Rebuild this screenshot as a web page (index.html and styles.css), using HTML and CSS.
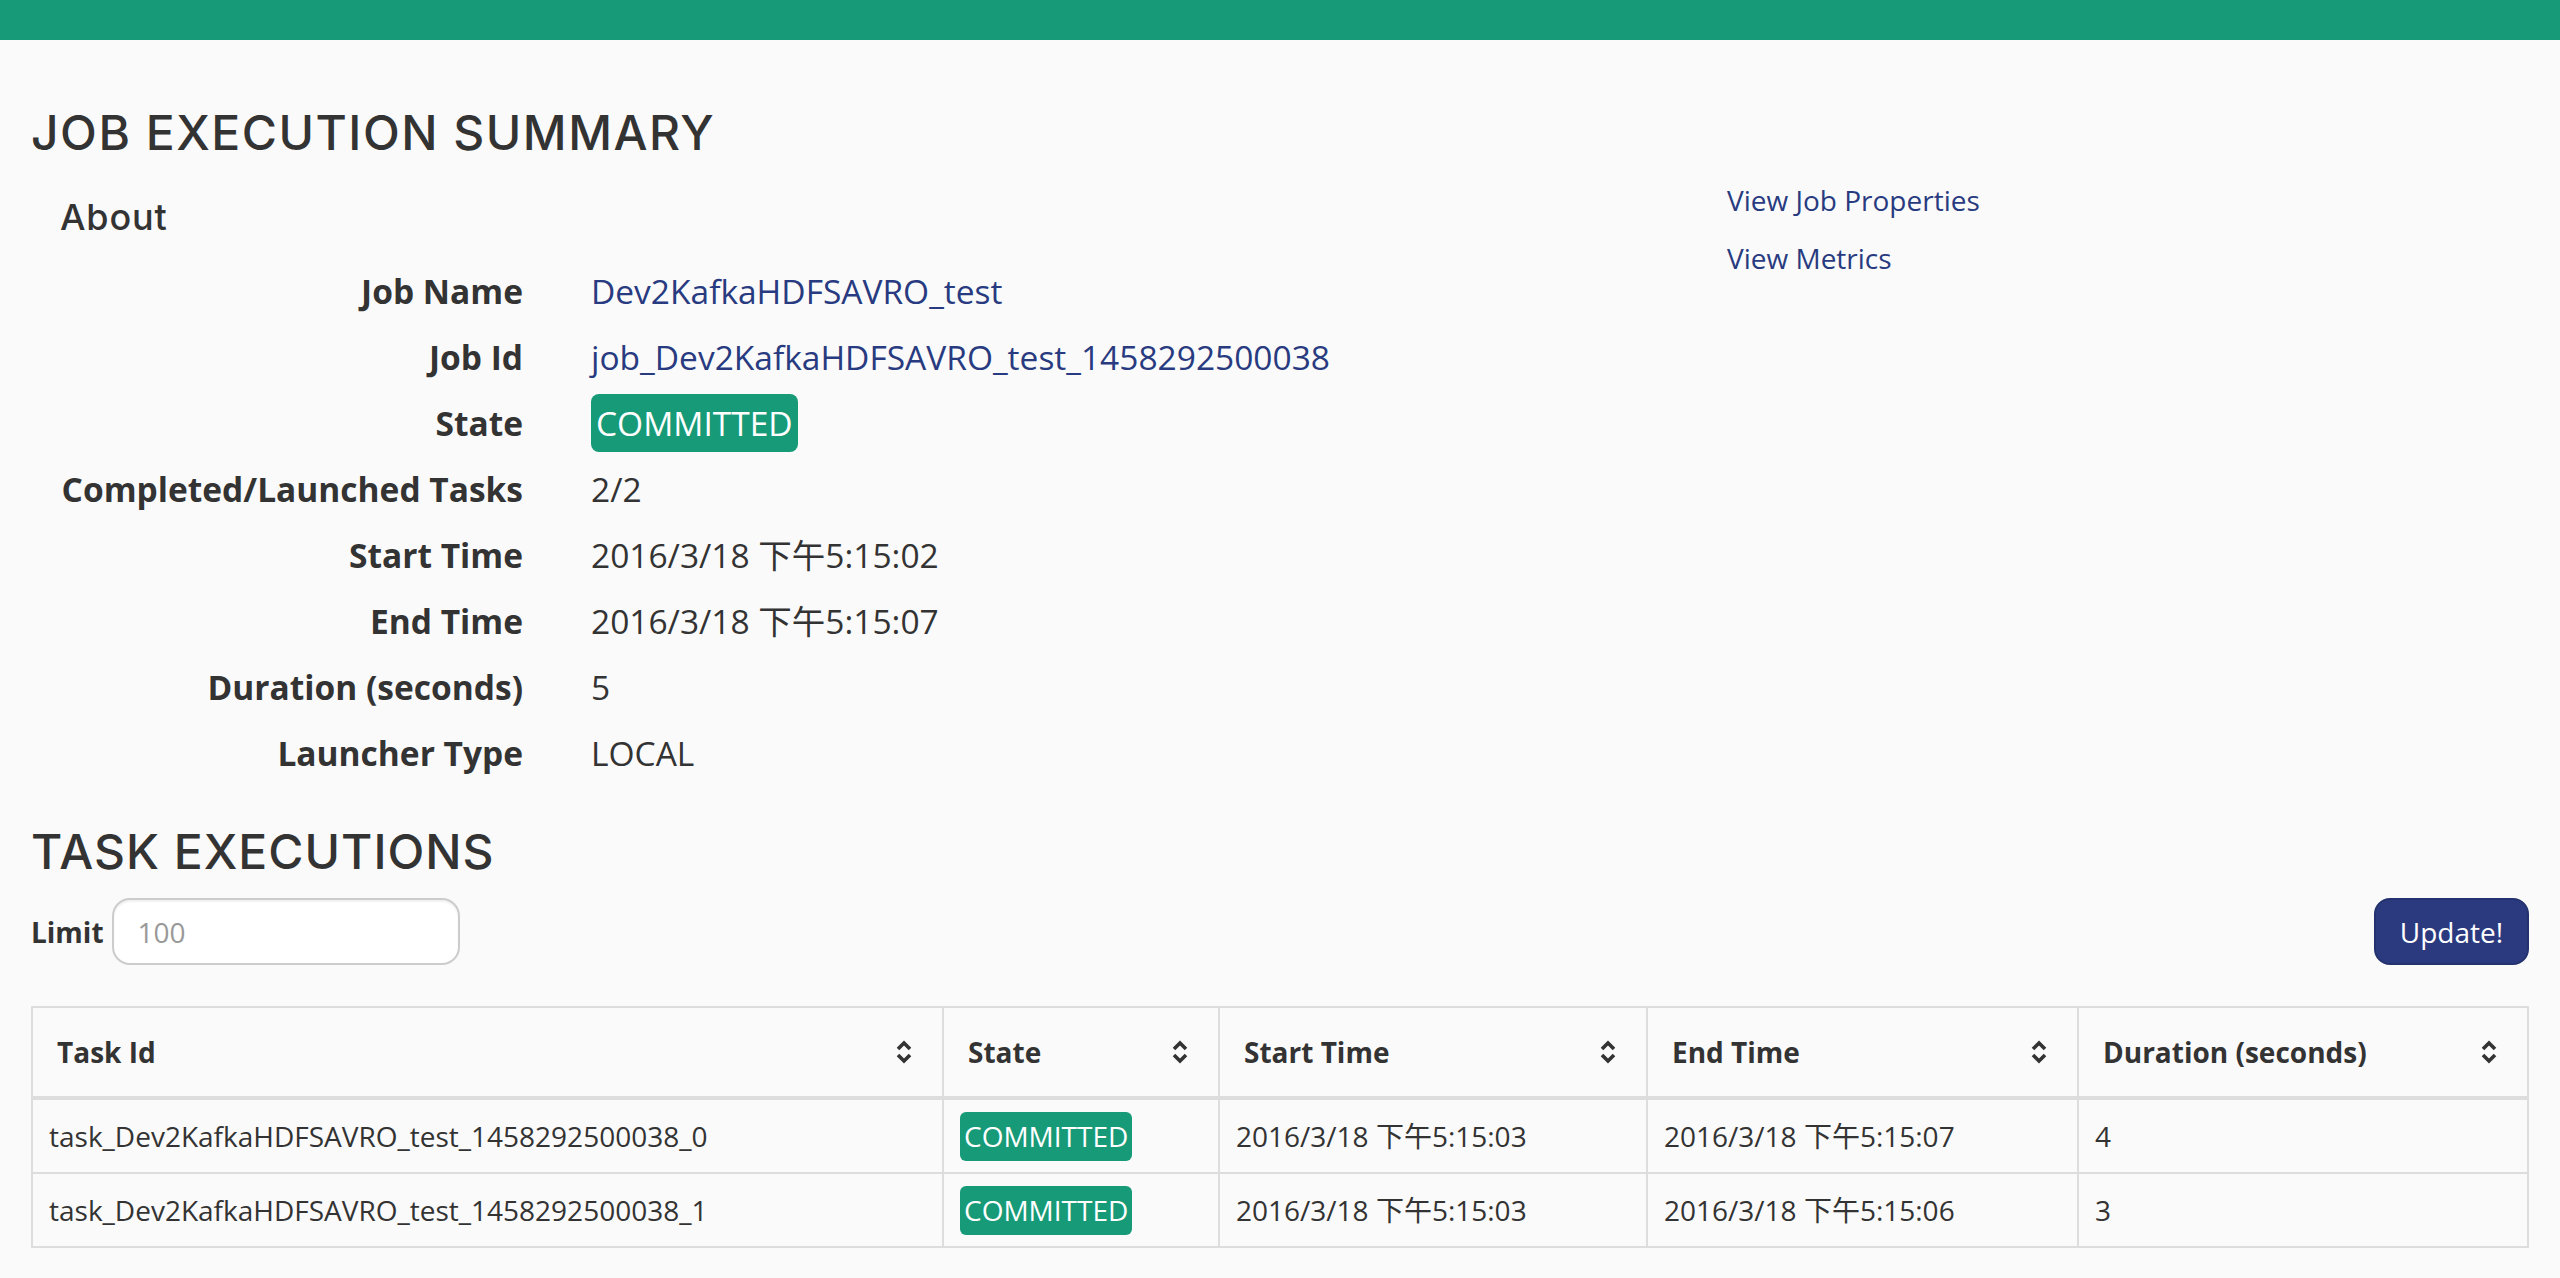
FILE: index.html
```html
<!DOCTYPE html>
<html>
<head>
<meta charset="utf-8">
<link rel="stylesheet" href="styles.css">
</head>
<body>
<div class="topbar"></div>
<main class="container">
  <h1 class="page-title">JOB EXECUTION SUMMARY</h1>
  <div class="summary-row">
    <div class="summary-main">
      <h3 class="about">About</h3>
      <dl class="details">
        <dt>Job Name</dt><dd><a href="#">Dev2KafkaHDFSAVRO_test</a></dd>
        <dt>Job Id</dt><dd><a href="#">job_Dev2KafkaHDFSAVRO_test_1458292500038</a></dd>
        <dt>State</dt><dd><span class="badge badge-lg">COMMITTED</span></dd>
        <dt>Completed/Launched Tasks</dt><dd>2/2</dd>
        <dt>Start Time</dt><dd>2016/3/18 下午5:15:02</dd>
        <dt>End Time</dt><dd>2016/3/18 下午5:15:07</dd>
        <dt>Duration (seconds)</dt><dd>5</dd>
        <dt>Launcher Type</dt><dd>LOCAL</dd>
      </dl>
    </div>
    <div class="summary-side">
      <a href="#" class="side-link">View Job Properties</a>
      <a href="#" class="side-link">View Metrics</a>
    </div>
  </div>

  <h1 class="page-title section-title">TASK EXECUTIONS</h1>
  <div class="limit-row">
    <label class="limit-label">Limit</label>
    <input class="limit-input" type="text" placeholder="100">
    <span class="spacer"></span>
    <button class="update-btn">Update!</button>
  </div>

  <table class="tasks">
    <thead>
      <tr>
        <th class="c-id"><span>Task Id</span><svg class="sort" viewBox="0 0 18 28"><path d="M3 11 L9 5 L15 11 M3 17 L9 23 L15 17"/></svg></th>
        <th class="c-state"><span>State</span><svg class="sort" viewBox="0 0 18 28"><path d="M3 11 L9 5 L15 11 M3 17 L9 23 L15 17"/></svg></th>
        <th class="c-start"><span>Start Time</span><svg class="sort" viewBox="0 0 18 28"><path d="M3 11 L9 5 L15 11 M3 17 L9 23 L15 17"/></svg></th>
        <th class="c-end"><span>End Time</span><svg class="sort" viewBox="0 0 18 28"><path d="M3 11 L9 5 L15 11 M3 17 L9 23 L15 17"/></svg></th>
        <th class="c-dur"><span>Duration (seconds)</span><svg class="sort" viewBox="0 0 18 28"><path d="M3 11 L9 5 L15 11 M3 17 L9 23 L15 17"/></svg></th>
      </tr>
    </thead>
    <tbody>
      <tr>
        <td>task_Dev2KafkaHDFSAVRO_test_1458292500038_0</td>
        <td><span class="badge">COMMITTED</span></td>
        <td>2016/3/18 下午5:15:03</td>
        <td>2016/3/18 下午5:15:07</td>
        <td>4</td>
      </tr>
      <tr>
        <td>task_Dev2KafkaHDFSAVRO_test_1458292500038_1</td>
        <td><span class="badge">COMMITTED</span></td>
        <td>2016/3/18 下午5:15:03</td>
        <td>2016/3/18 下午5:15:06</td>
        <td>3</td>
      </tr>
    </tbody>
  </table>
</main>
</body>
</html>
```

FILE: styles.css
```css
* { box-sizing: border-box; }
html, body {
  margin: 0;
  padding: 0;
  background: #fafafa;
  color: #333;
  font-family: "Open Sans", "Noto Sans CJK SC", sans-serif;
}
a { color: #293b80; text-decoration: none; }

.topbar {
  height: 40px;
  background: #169a78;
}
.container {
  padding: 0 31px;
}
.page-title {
  font-family: "Inter", "Noto Sans", sans-serif;
  font-weight: 500;
  font-size: 48px;
  line-height: 48px;
  letter-spacing: 1.5px;
  margin: 69px 0 0;
  color: #333;
}
.summary-row {
  display: grid;
  grid-template-columns: 1696px 1fr;
  margin-top: 14px;
}
.about {
  font-family: "Inter", "Noto Sans", sans-serif;
  font-weight: 500;
  font-size: 36px;
  line-height: 36px;
  letter-spacing: 0.8px;
  margin: 28px 0 0 29px;
}
.details {
  display: grid;
  grid-template-columns: 492px 1fr;
  column-gap: 68px;
  margin: 23px 0 0;
  font-size: 33.5px;
  line-height: 66px;
}
.details dt {
  text-align: right;
  font-weight: 700;
}
.details dd { margin: 0; }
.badge {
  display: inline;
  background: #169a78;
  color: #fff;
  border-radius: 6px;
  padding: 5px 4px 6px;
}
.badge-lg {
  padding: 6px 5px;
  border-radius: 8px;
}
.summary-side {
  display: flex;
  flex-direction: column;
}
.side-link {
  font-size: 28px;
  line-height: 58px;
}

.section-title {
  margin-top: 42px;
  letter-spacing: 1px;
}
.limit-row {
  display: flex;
  align-items: center;
  margin-top: 22px;
  height: 67px;
}
.limit-label {
  font-weight: 700;
  font-size: 28px;
  margin-right: 8px;
}
.limit-input {
  width: 348px;
  height: 67px;
  border: 2px solid #ccc;
  border-radius: 18px;
  background: #fff;
  padding: 0 24px;
  font-family: "Open Sans", sans-serif;
  font-size: 28px;
  color: #555;
  box-shadow: inset 0 2px 2px rgba(0,0,0,0.06);
}
.limit-input::placeholder { color: #999; }
.spacer { flex: 1; }
.update-btn {
  width: 155px;
  height: 67px;
  border: 2px solid #24336f;
  border-radius: 16px;
  background: #2b3a7e;
  color: #fff;
  font-family: "Open Sans", sans-serif;
  font-size: 28px;
  padding: 0;
}

.tasks {
  width: 100%;
  margin-top: 41px;
  border-collapse: collapse;
  table-layout: fixed;
  font-size: 28px;
  line-height: 40px;
  border: 2px solid #ddd;
}
.c-id { width: 911px; }
.c-state { width: 276px; }
.c-start { width: 428px; }
.c-end { width: 431px; }
.tasks th {
  position: relative;
  text-align: left;
  font-weight: 700;
  padding: 24px 60px 24px 24px;
  border: 2px solid #ddd;
  border-bottom-width: 4px;
}
.tasks td {
  padding: 16px;
  border: 2px solid #ddd;
  white-space: nowrap;
}
.sort {
  position: absolute;
  right: 29px;
  top: 30px;
  width: 18px;
  height: 28px;
  fill: none;
  stroke: #333;
  stroke-width: 3.6;
}
```
